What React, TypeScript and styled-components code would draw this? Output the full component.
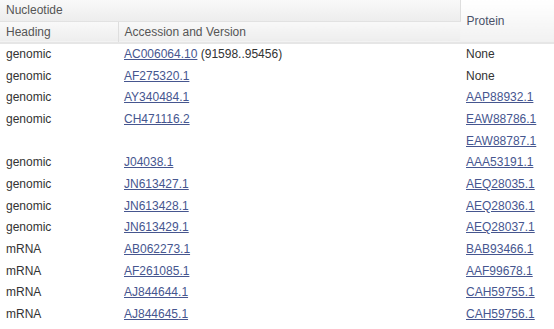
import React from "react";
import styled, { createGlobalStyle } from "styled-components";

const Global = createGlobalStyle`
  html, body { margin: 0; padding: 0; background: #fff; }
  body { font-family: "Liberation Sans", Arial, sans-serif; font-size: 12px; color: #333; }
`;

const Table = styled.table`
  width: 554px;
  border-collapse: collapse;
  table-layout: fixed;
`;

const Col = styled.col<{ $w: number }>`
  width: ${(p) => p.$w}px;
`;

const Th = styled.th<{ $divider?: boolean; $light?: boolean }>`
  height: 20.5px;
  padding: 0 6px;
  text-align: left;
  font-weight: normal;
  font-size: 12px;
  color: ${(p) => (p.$light ? "#4a5268" : "#555")};
  background: linear-gradient(#f9f9f9, #ededed);
  border-right: ${(p) => (p.$divider ? "1px solid #dedede" : "none")};
  border-bottom: 1px solid #e2e2e2;
  vertical-align: middle;
  white-space: nowrap;
`;

const ProteinTh = styled(Th)`
  background: linear-gradient(#ffffff, #f1f1f1);
  border-bottom: 2px solid #e6e6e6;
`;

const SubTh = styled(Th)`
  border-bottom: 2px solid #e6e6e6;
`;

const Td = styled.td`
  height: 21.67px;
  padding: 0 6px;
  line-height: 21.67px;
  vertical-align: top;
  white-space: nowrap;
  color: #333;
`;

const Link = styled.a`
  color: #46568f;
  text-decoration: underline;
  display: block;
  width: fit-content;
  height: 21.67px;
`;

const Inline = styled.a`
  color: #46568f;
  text-decoration: underline;
`;

type Row = { h: string; acc: string; extra?: string; prot: string[] };

const rows: Row[] = [
  { h: "genomic", acc: "AC006064.10", extra: " (91598..95456)", prot: [] },
  { h: "genomic", acc: "AF275320.1", prot: [] },
  { h: "genomic", acc: "AY340484.1", prot: ["AAP88932.1"] },
  { h: "genomic", acc: "CH471116.2", prot: ["EAW88786.1", "EAW88787.1"] },
  { h: "genomic", acc: "J04038.1", prot: ["AAA53191.1"] },
  { h: "genomic", acc: "JN613427.1", prot: ["AEQ28035.1"] },
  { h: "genomic", acc: "JN613428.1", prot: ["AEQ28036.1"] },
  { h: "genomic", acc: "JN613429.1", prot: ["AEQ28037.1"] },
  { h: "mRNA", acc: "AB062273.1", prot: ["BAB93466.1"] },
  { h: "mRNA", acc: "AF261085.1", prot: ["AAF99678.1"] },
  { h: "mRNA", acc: "AJ844644.1", prot: ["CAH59755.1"] },
  { h: "mRNA", acc: "AJ844645.1", prot: ["CAH59756.1"] },
  { h: "mRNA", acc: "AK000000.1", prot: ["BAA00000.1"] },
];

export default function App() {
  return (
    <>
      <Global />
      <Table>
        <colgroup>
          <Col $w={118} />
          <Col $w={342} />
          <Col $w={94} />
        </colgroup>
        <thead>
          <tr>
            <Th colSpan={2} $divider>Nucleotide</Th>
            <ProteinTh rowSpan={2} $light>Protein</ProteinTh>
          </tr>
          <tr>
            <SubTh $divider>Heading</SubTh>
            <SubTh>Accession and Version</SubTh>
          </tr>
        </thead>
        <tbody>
          {rows.map((r, i) => (
            <tr key={i}>
              <Td>{r.h}</Td>
              <Td>
                <Inline href="#">{r.acc}</Inline>
                {r.extra}
              </Td>
              <Td>
                {r.prot.length === 0
                  ? "None"
                  : r.prot.map((p) => (
                      <Link key={p} href="#">
                        {p}
                      </Link>
                    ))}
              </Td>
            </tr>
          ))}
        </tbody>
      </Table>
    </>
  );
}
